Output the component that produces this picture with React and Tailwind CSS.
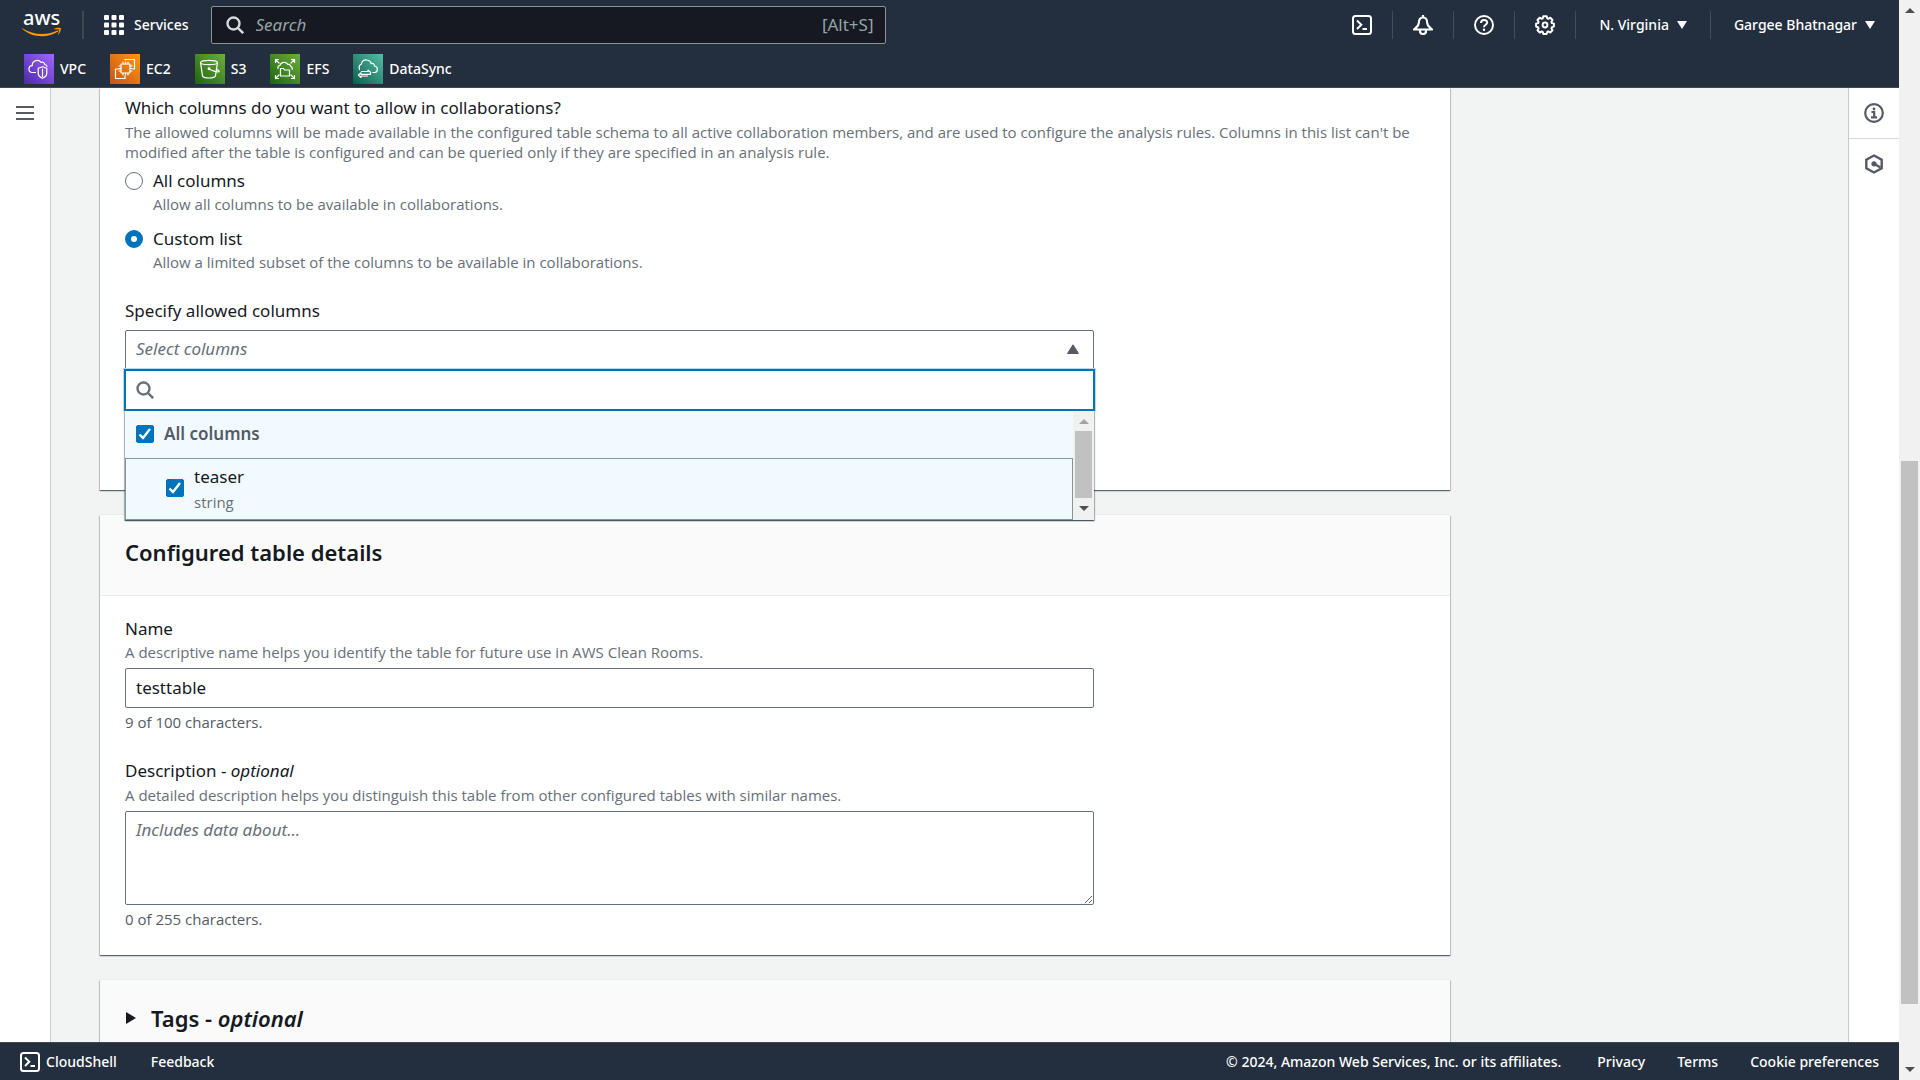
import { useState } from "react";

const favorites = [
  { name: "VPC", tile: "from-[#4d27a8] to-[#a166ff]", icon: <VpcIcon /> },
  { name: "EC2", tile: "from-[#c8511b] to-[#ff9900]", icon: <Ec2Icon /> },
  { name: "S3", tile: "from-[#1b660f] to-[#6cae3e]", icon: <S3Icon /> },
  { name: "EFS", tile: "from-[#1b660f] to-[#6cae3e]", icon: <EfsIcon /> },
  { name: "DataSync", tile: "from-[#055f4e] to-[#56c0a7]", icon: <DataSyncIcon /> },
];

function TileSvg({ children }) {
  return (
    <svg viewBox="0 0 30 30" className="size-[30px]" fill="none" stroke="#fff" strokeWidth="1.2" strokeLinecap="round" strokeLinejoin="round" aria-hidden="true">
      {children}
    </svg>
  );
}

function VpcIcon() {
  return (
    <TileSvg>
      <path d="M11.5 18.500H8.500a3.400 3.400 0 0 1-.3-6.800 5 5 0 0 1 9-3.200 2.400 2.400 0 0 1 3.500 2c1.200.2 2 .8 2.300 1.800" />
      <path d="m18.500 12.800 4.300 1.500v5c0 2.500-2 4-4.300 5-2.300-1-4.300-2.500-4.300-5v-5z" />
      <path d="M18.500 15v7.500" />
    </TileSvg>
  );
}

function Ec2Icon() {
  return (
    <TileSvg>
      <rect x="11" y="10" width="9" height="9" rx="0.500" />
      <path d="M13 10V8m2.500 2V8M18 10V8m-5 13v-2m2.500 2v-2m2.500 2v-2M11 12H9m2 2.500H9M11 17H9m13-5h-2m2 2.500h-2m2 2.500h-2" />
      <path d="M15 6V5.500h9.500V15H23M9 15H5.500v9.500H15V22" />
    </TileSvg>
  );
}

function S3Icon() {
  return (
    <TileSvg>
      <ellipse cx="14" cy="8.500" rx="8.500" ry="2.200" />
      <path d="m5.500 8.500 2 13.200c.5 1.500 3.500 2.300 6.500 2.300s6-.8 6.500-2.300l2-13.200" />
      <path d="M14 15c3 1.500 7.500 3.200 10 2.700.8-.5-.5-1.500-2.500-2.500" />
      <circle cx="14" cy="14.700" r="0.800" fill="#fff" />
    </TileSvg>
  );
}

function EfsIcon() {
  return (
    <TileSvg>
      <path d="m5.500 5.500 3.500 3.500M5.500 8.500v-3h3m16 0L21 9m.5-3.500h3v3m-19 16L9 21m-3.500.5v3h3m16 0L21 21m.5 3.500h3v-3" />
      <path d="M8 14.500c-.5-1.800.5-3 2-3.200 1-3.600 6.500-4 8-.8 2-.3 2.500.8 2.500 1.800 1.500.5 2 1.500 1.700 3" />
      <path d="M10.500 14.500h3l1 1.500h5v6h-9z" />
    </TileSvg>
  );
}

function DataSyncIcon() {
  return (
    <TileSvg>
      <path d="M6.500 15.500a4 4 0 0 1 2-5.500c.3-3.200 3-4.500 5.500-4 2.200.3 3.700 1.700 4.200 3.600 1.800-.8 3.300.4 3.300 2.400 3.700.5 3.800 6 .3 6.500h-2" />
      <path d="M8.500 17.500h6.500V16l2.700 2.500M14.500 22H8v1.500l-2.500-2.500L8 18.800v1.500h9.500v-1.500" />
    </TileSvg>
  );
}

function AwsLogo() {
  return (
    <svg viewBox="0 0 40 48" className="h-12 w-10" role="img" aria-label="aws">
      <text x="1" y="24" fontSize="20" fontFamily="'Noto Sans', sans-serif" fontWeight="500" fill="#fff">aws</text>
      <path d="M0.300 27.200c10.500 6.800 24 7.600 35 2.200.9-.4 1.600.5.800 1.100C26 37.500 9.500 37 0.200 27.800c-.3-.3-.2-.8.100-.6z" fill="#ff9900" />
      <path d="M32.500 27.600c1.500-1 5.600-1.200 6.200-.5.6.8-.3 4.600-2.300 6.300-.3.200-.6.100-.4-.3.600-1.500 1.500-3.900 1.100-4.400-.5-.6-3-.4-4.300-.2-.6.100-.7-.600-.3-.9z" fill="#ff9900" />
    </svg>
  );
}

function ShellIcon() {
  return (
    <svg viewBox="0 0 20 20" className="size-5 shrink-0" fill="none" stroke="currentColor" strokeWidth="2" aria-hidden="true">
      <rect x="1" y="1" width="18" height="18" rx="2.500" />
      <path d="m5 5.500 4.300 4.300L5 14M10.500 14H15" />
    </svg>
  );
}

function BellIcon() {
  return (
    <svg viewBox="0 0 20 20" className="size-5" fill="none" stroke="currentColor" strokeWidth="2.200" strokeLinejoin="round" aria-hidden="true">
      <path d="M10 0v2.500M5.800 8c0-3.300 1.600-5.500 4.200-5.500S14.200 4.700 14.200 8c0 3 2.600 4 4.800 6.500H1C3.200 12 5.800 11 5.800 8z" />
      <path d="M7 14.500v1.500a3 3 0 0 0 6 0v-1.500" />
    </svg>
  );
}

function HelpIcon() {
  return (
    <svg viewBox="0 0 20 20" className="size-5" fill="none" stroke="currentColor" strokeWidth="2" aria-hidden="true">
      <circle cx="10" cy="10" r="9" />
      <path d="M7 8c0-4 6.200-3.800 6.200-.4 0 2.200-3.200 2.100-3.200 4.600" />
      <circle cx="10" cy="14.700" r="1.200" fill="currentColor" stroke="none" />
    </svg>
  );
}

function GearIcon() {
  return (
    <svg viewBox="0 0 20 20" className="size-5" fill="none" stroke="currentColor" strokeWidth="2" strokeLinejoin="round" aria-hidden="true">
      <path d="M8.300 1.200h3.400l.6 2.200 1 .4 2-1.100 2.200 2.300-1.100 1.900.5 1.200 2 .5v3l-2 .6-.5 1.100 1.100 2-2.200 2.200-2-1.100-1 .5-.6 2H8.300l-.6-2-1-.5-2 1.100-2.200-2.200 1.100-2-.5-1.100-2-.6v-3l2-.5.5-1.200L2.500 5l2.200-2.300 2 1.100 1-.4z" />
      <circle cx="10" cy="10" r="2.400" />
    </svg>
  );
}

function SearchIcon({ className }) {
  return (
    <svg viewBox="0 0 18 18" className={className} fill="none" stroke="currentColor" strokeWidth="2.400" aria-hidden="true">
      <circle cx="7.500" cy="7.500" r="6" />
      <path d="m11.800 11.800 5.400 5.400" />
    </svg>
  );
}

function Caret() {
  return (
    <svg viewBox="0 0 10 8" className="h-2 w-2.5" fill="currentColor" aria-hidden="true">
      <path d="M0 0h10L5 8z" />
    </svg>
  );
}

function Divider() {
  return <span className="h-7 w-px bg-[#414d5c]" />;
}

function TopNav() {
  return (
    <header className="h-[88px] shrink-0 border-b border-[#414750] bg-[#232f3e] text-white">
      <div className="flex h-[50px] items-center pr-[21px] pl-[22px]">
        <a href="#home">
          <AwsLogo />
        </a>
        <span className="ml-5 h-7 w-0.5 bg-[#414750]" />
        <button type="button" className="ml-5 flex items-center gap-2.5 text-sm font-medium">
          <svg viewBox="0 0 20 20" className="size-5" fill="currentColor" aria-hidden="true">
            {[0, 7.5, 15].map((y) =>
              [0, 7.5, 15].map((x) => <rect key={`${x}-${y}`} x={x} y={y} width="5" height="5" rx="1" />)
            )}
          </svg>
          Services
        </button>
        <div className="ml-[22px] flex h-[38px] w-full max-w-[675px] items-center rounded-xs border border-[#879596] bg-[#161922] pr-[11px] pl-3.5">
          <SearchIcon className="size-[18px] shrink-0 text-[#d5dbdb]" />
          <input
            type="search"
            aria-label="Search"
            placeholder="Search"
            className="ml-3 min-w-0 flex-1 bg-transparent text-[17px] italic outline-none placeholder:text-[#95a5a6]"
          />
          <span className="text-[17px] text-[#95a5a6]">[Alt+S]</span>
        </div>
        <div className="ml-auto flex shrink-0 items-center gap-5 pl-5 text-sm font-medium">
          <button type="button" aria-label="CloudShell"><ShellIcon /></button>
          <Divider />
          <button type="button" aria-label="Notifications"><BellIcon /></button>
          <Divider />
          <button type="button" aria-label="Support"><HelpIcon /></button>
          <Divider />
          <button type="button" aria-label="Settings"><GearIcon /></button>
          <Divider />
          <button type="button" className="flex items-center gap-2 px-[3px]">N. Virginia <Caret /></button>
          <Divider />
          <button type="button" className="flex items-center gap-2 px-[3px]">Gargee Bhatnagar <Caret /></button>
        </div>
      </div>
      <nav className="flex h-[38px] items-center gap-6 pl-6" aria-label="Favorites">
        {favorites.map(({ name, tile, icon }) => (
          <a key={name} href={`#${name}`} className="flex items-center gap-1.5 text-sm font-medium">
            <span className={`bg-linear-to-tr ${tile}`}>{icon}</span>
            {name}
          </a>
        ))}
      </nav>
    </header>
  );
}

function Card({ children, className = "" }) {
  return (
    <section className={`bg-white shadow-[0_1px_1px_0_rgba(0,28,36,0.5),1px_1px_1px_0_rgba(0,28,36,0.15),-1px_1px_1px_0_rgba(0,28,36,0.15),0_-1px_0_0_#eaeded] ${className}`}>
      {children}
    </section>
  );
}

function Hint({ children, className = "" }) {
  return <p className={`font-['Open_Sans',sans-serif] text-[15px]/5 ${className}`}>{children}</p>;
}

function RadioOption({ id, label, description, checked, onChange }) {
  return (
    <div className="flex gap-2.5">
      <input
        type="radio"
        name="allowed"
        id={id}
        checked={checked}
        onChange={onChange}
        aria-describedby={`${id}-hint`}
        className="mt-[3px] size-[18px] shrink-0 appearance-none rounded-full border border-[#687078] bg-white checked:border-[6px] checked:border-[#0073bb]"
      />
      <div>
        <label htmlFor={id} className="block text-[17px]/6">{label}</label>
        <div id={`${id}-hint`}>
          <Hint className="mt-px text-[#687078]">{description}</Hint>
        </div>
      </div>
    </div>
  );
}

function Checkbox({ id, checked, onChange }) {
  return (
    <span className="relative size-[18px] shrink-0">
      <input
        type="checkbox"
        id={id}
        checked={checked}
        onChange={onChange}
        className="peer block size-[18px] appearance-none rounded-xs border border-[#687078] bg-white checked:border-[#0073bb] checked:bg-[#0073bb]"
      />
      <svg viewBox="0 0 18 18" className="pointer-events-none absolute inset-0 hidden size-[18px] peer-checked:block" fill="none" stroke="#fff" strokeWidth="2.400" aria-hidden="true">
        <path d="m3.500 9.500 3.500 3.500 7-9" />
      </svg>
    </span>
  );
}

function ColumnPicker() {
  const [picked, setPicked] = useState(true);
  const toggle = () => setPicked(!picked);

  return (
    <div className="relative mt-[7px] max-w-[969px]">
      <button
        type="button"
        id="columns"
        aria-expanded="true"
        className="flex h-10 w-full items-center justify-between rounded-t-xs border border-[#687078] bg-white px-2.5 pb-0.5 text-[17px] text-[#687078] italic"
      >
        Select columns
        <svg viewBox="0 0 14 12" className="mr-[3px] h-3 w-3.5" fill="#545b64" aria-hidden="true">
          <path d="M7 1.800 12.500 10.500h-11z" stroke="#545b64" strokeLinejoin="round" />
        </svg>
      </button>
      <div className="absolute inset-x-0 top-full z-10 -mt-px bg-white shadow-[0_1px_1px_0_rgba(0,28,36,0.5),1px_1px_1px_0_rgba(0,28,36,0.25),-1px_1px_1px_0_rgba(0,28,36,0.25)]">
        <div className="-mx-px flex h-[42px] items-center border-2 border-[#0073bb] bg-white pl-2.5 shadow-[0_0_0_1px_#b8d9ee]">
          <SearchIcon className="size-[18px] text-[#687078]" />
          <input type="text" aria-label="Filter columns" className="ml-2 min-w-0 flex-1 text-[17px] outline-none" />
        </div>
        <div className="flex">
          <div className="flex-1 bg-[#f1faff]">
            <div className="flex h-[47px] items-center gap-2.5 pb-0.5 pl-[11px]">
              <Checkbox id="all-columns" checked={picked} onChange={toggle} />
              <label htmlFor="all-columns" className="text-[17px] font-semibold text-[#545b64]">All columns</label>
            </div>
            <div className="flex h-[62px] items-center gap-2.5 border border-[#879596] pb-0.5 pl-10">
              <Checkbox id="teaser" checked={picked} onChange={toggle} />
              <div>
                <label htmlFor="teaser" className="block text-[17px]/6">teaser</label>
                <Hint className="mt-[3px] text-[#687078]">string</Hint>
              </div>
            </div>
          </div>
          <div className="flex w-[21px] flex-col items-center bg-[#f1f1f1] py-2" aria-hidden="true">
            <span className="size-0 border-x-[5px] border-b-[5px] border-x-transparent border-b-[#a3a3a3]" />
            <span className="mt-[7px] h-[67px] w-[17px] bg-[#c1c1c1]" />
            <span className="mt-2 size-0 border-x-[5px] border-t-[5px] border-x-transparent border-t-[#505050]" />
          </div>
        </div>
      </div>
    </div>
  );
}

function AllowedColumns() {
  const [mode, setMode] = useState("custom");

  return (
    <Card className="px-[25px] pt-2 pb-[120px]">
      <h3 className="text-[17px]/6">Which columns do you want to allow in collaborations?</h3>
      <Hint className="mt-0.5 text-[#687078]">
        The allowed columns will be made available in the configured table schema to all active collaboration members, and are used to configure the analysis rules. Columns in this list can't be modified after the table is configured and can be queried only if they are specified in an analysis rule.
      </Hint>
      <div className="mt-[7px] flex flex-col gap-[13px]">
        <RadioOption
          id="mode-all"
          label="All columns"
          description="Allow all columns to be available in collaborations."
          checked={mode === "all"}
          onChange={() => setMode("all")}
        />
        <RadioOption
          id="mode-custom"
          label="Custom list"
          description="Allow a limited subset of the columns to be available in collaborations."
          checked={mode === "custom"}
          onChange={() => setMode("custom")}
        />
      </div>
      <label htmlFor="columns" className="mt-[27px] block text-[17px]/6">Specify allowed columns</label>
      <ColumnPicker />
    </Card>
  );
}

function TableDetails() {
  const [name, setName] = useState("testtable");
  const [description, setDescription] = useState("");

  return (
    <Card>
      <div className="border-b border-[#eaeded] bg-[#fafafa] px-[25px] pt-[23px] pb-[29px]">
        <h2 className="text-[22px]/7 font-semibold">Configured table details</h2>
      </div>
      <div className="px-[25px] pt-[21px] pb-[26px]">
        <label htmlFor="name" className="block text-[17px]/6">Name</label>
        <Hint className="mt-px text-[#687078]">A descriptive name helps you identify the table for future use in AWS Clean Rooms.</Hint>
        <input
          id="name"
          type="text"
          value={name}
          onChange={(e) => setName(e.target.value)}
          className="mt-1.5 block h-10 w-full max-w-[969px] rounded-xs border border-[#687078] bg-white px-2.5 pb-0.5 text-[17px] outline-none"
        />
        <Hint className="mt-1 text-[#545b64]">{name.length} of 100 characters.</Hint>

        <label htmlFor="description" className="mt-[27px] block text-[17px]/6">
          Description - <i>optional</i>
        </label>
        <Hint className="mt-0.5 text-[#687078]">A detailed description helps you distinguish this table from other configured tables with similar names.</Hint>
        <textarea
          id="description"
          placeholder="Includes data about..."
          value={description}
          onChange={(e) => setDescription(e.target.value)}
          className="mt-1.5 block h-[94px] w-full max-w-[969px] rounded-xs border border-[#687078] bg-white px-2.5 py-1.5 text-[17px]/6 outline-none placeholder:text-[#687078] placeholder:italic"
        />
        <Hint className="mt-1 text-[#545b64]">{description.length} of 255 characters.</Hint>
      </div>
    </Card>
  );
}

function SidePanel() {
  return (
    <aside className="w-[51px] shrink-0 border-l border-[#c5cccc] bg-white text-[#545b64]">
      <button type="button" aria-label="Info" className="flex h-[51px] w-full items-center justify-center border-b border-[#d5dbdb]">
        <svg viewBox="0 0 20 20" className="size-5" fill="none" stroke="currentColor" strokeWidth="2.200" aria-hidden="true">
          <circle cx="10" cy="10" r="8.800" />
          <path d="M7.500 9h2.700v5.300M7 14.300h6" strokeWidth="2.200" />
          <circle cx="10" cy="6" r="1.400" fill="currentColor" stroke="none" />
        </svg>
      </button>
      <button type="button" aria-label="Tutorials" className="flex h-[50px] w-full items-center justify-center">
        <svg viewBox="0 0 20 20" className="size-5" fill="none" stroke="currentColor" strokeWidth="2.400" aria-hidden="true">
          <path d="m10 1.500 7.700 4.300v8.400L10 18.500l-7.700-4.300V5.800z" />
          <circle cx="10" cy="9.800" r="2.600" fill="currentColor" stroke="none" />
          <path d="m10 9.800 6.500 3.700" />
        </svg>
      </button>
    </aside>
  );
}

function Footer() {
  return (
    <footer className="flex h-[38px] shrink-0 items-center border-t border-[#414750] bg-[#232f3e] px-5 text-sm font-medium text-white">
      <button type="button" className="flex items-center gap-1.5"><ShellIcon /> CloudShell</button>
      <a href="#feedback" className="ml-[34px]">Feedback</a>
      <span className="ml-auto">© 2024, Amazon Web Services, Inc. or its affiliates.</span>
      <a href="#privacy" className="ml-9">Privacy</a>
      <a href="#terms" className="ml-8">Terms</a>
      <a href="#cookies" className="ml-8">Cookie preferences</a>
    </footer>
  );
}

export default function App() {
  return (
    <div className="flex h-screen overflow-hidden bg-[#f2f3f3] font-['Noto_Sans','Open_Sans',sans-serif] text-[#16191f]">
      <div className="flex min-w-0 flex-1 flex-col">
        <TopNav />
        <div className="flex min-h-0 flex-1">
          <aside className="w-[51px] shrink-0 border-r border-[#c5cccc] bg-white pt-[17px] pl-4">
            <button type="button" aria-label="Open navigation" className="block text-[#545b64]">
              <svg viewBox="0 0 18 16" className="h-4 w-[18px]" stroke="currentColor" strokeWidth="2" aria-hidden="true">
                <path d="M0 2h18M0 8h18M0 14h18" />
              </svg>
            </button>
          </aside>
          <main className="min-w-0 flex-1 overflow-hidden pl-[49px]">
            <div className="flex max-w-[1350px] flex-col gap-[25px]">
              <AllowedColumns />
              <TableDetails />
              <Card>
                <button type="button" aria-expanded="false" className="flex w-full items-center gap-[15px] bg-[#fafafa] px-[26px] py-6 text-[22px]/7 font-semibold">
                  <svg viewBox="0 0 10 12" className="h-3 w-2.5" fill="currentColor" aria-hidden="true">
                    <path d="M0 0v12l10-6z" />
                  </svg>
                  <span>Tags - <i>optional</i></span>
                </button>
              </Card>
            </div>
          </main>
          <SidePanel />
        </div>
        <Footer />
      </div>
      <div className="flex w-[21px] shrink-0 flex-col items-center bg-[#f1f1f1] py-2" aria-hidden="true">
        <span className="size-0 border-x-[5px] border-b-[5px] border-x-transparent border-b-[#505050]" />
        <span className="mt-[448px] h-[543px] w-[17px] bg-[#c1c1c1]" />
        <span className="mt-auto size-0 border-x-[5px] border-t-[5px] border-x-transparent border-t-[#505050]" />
      </div>
    </div>
  );
}
